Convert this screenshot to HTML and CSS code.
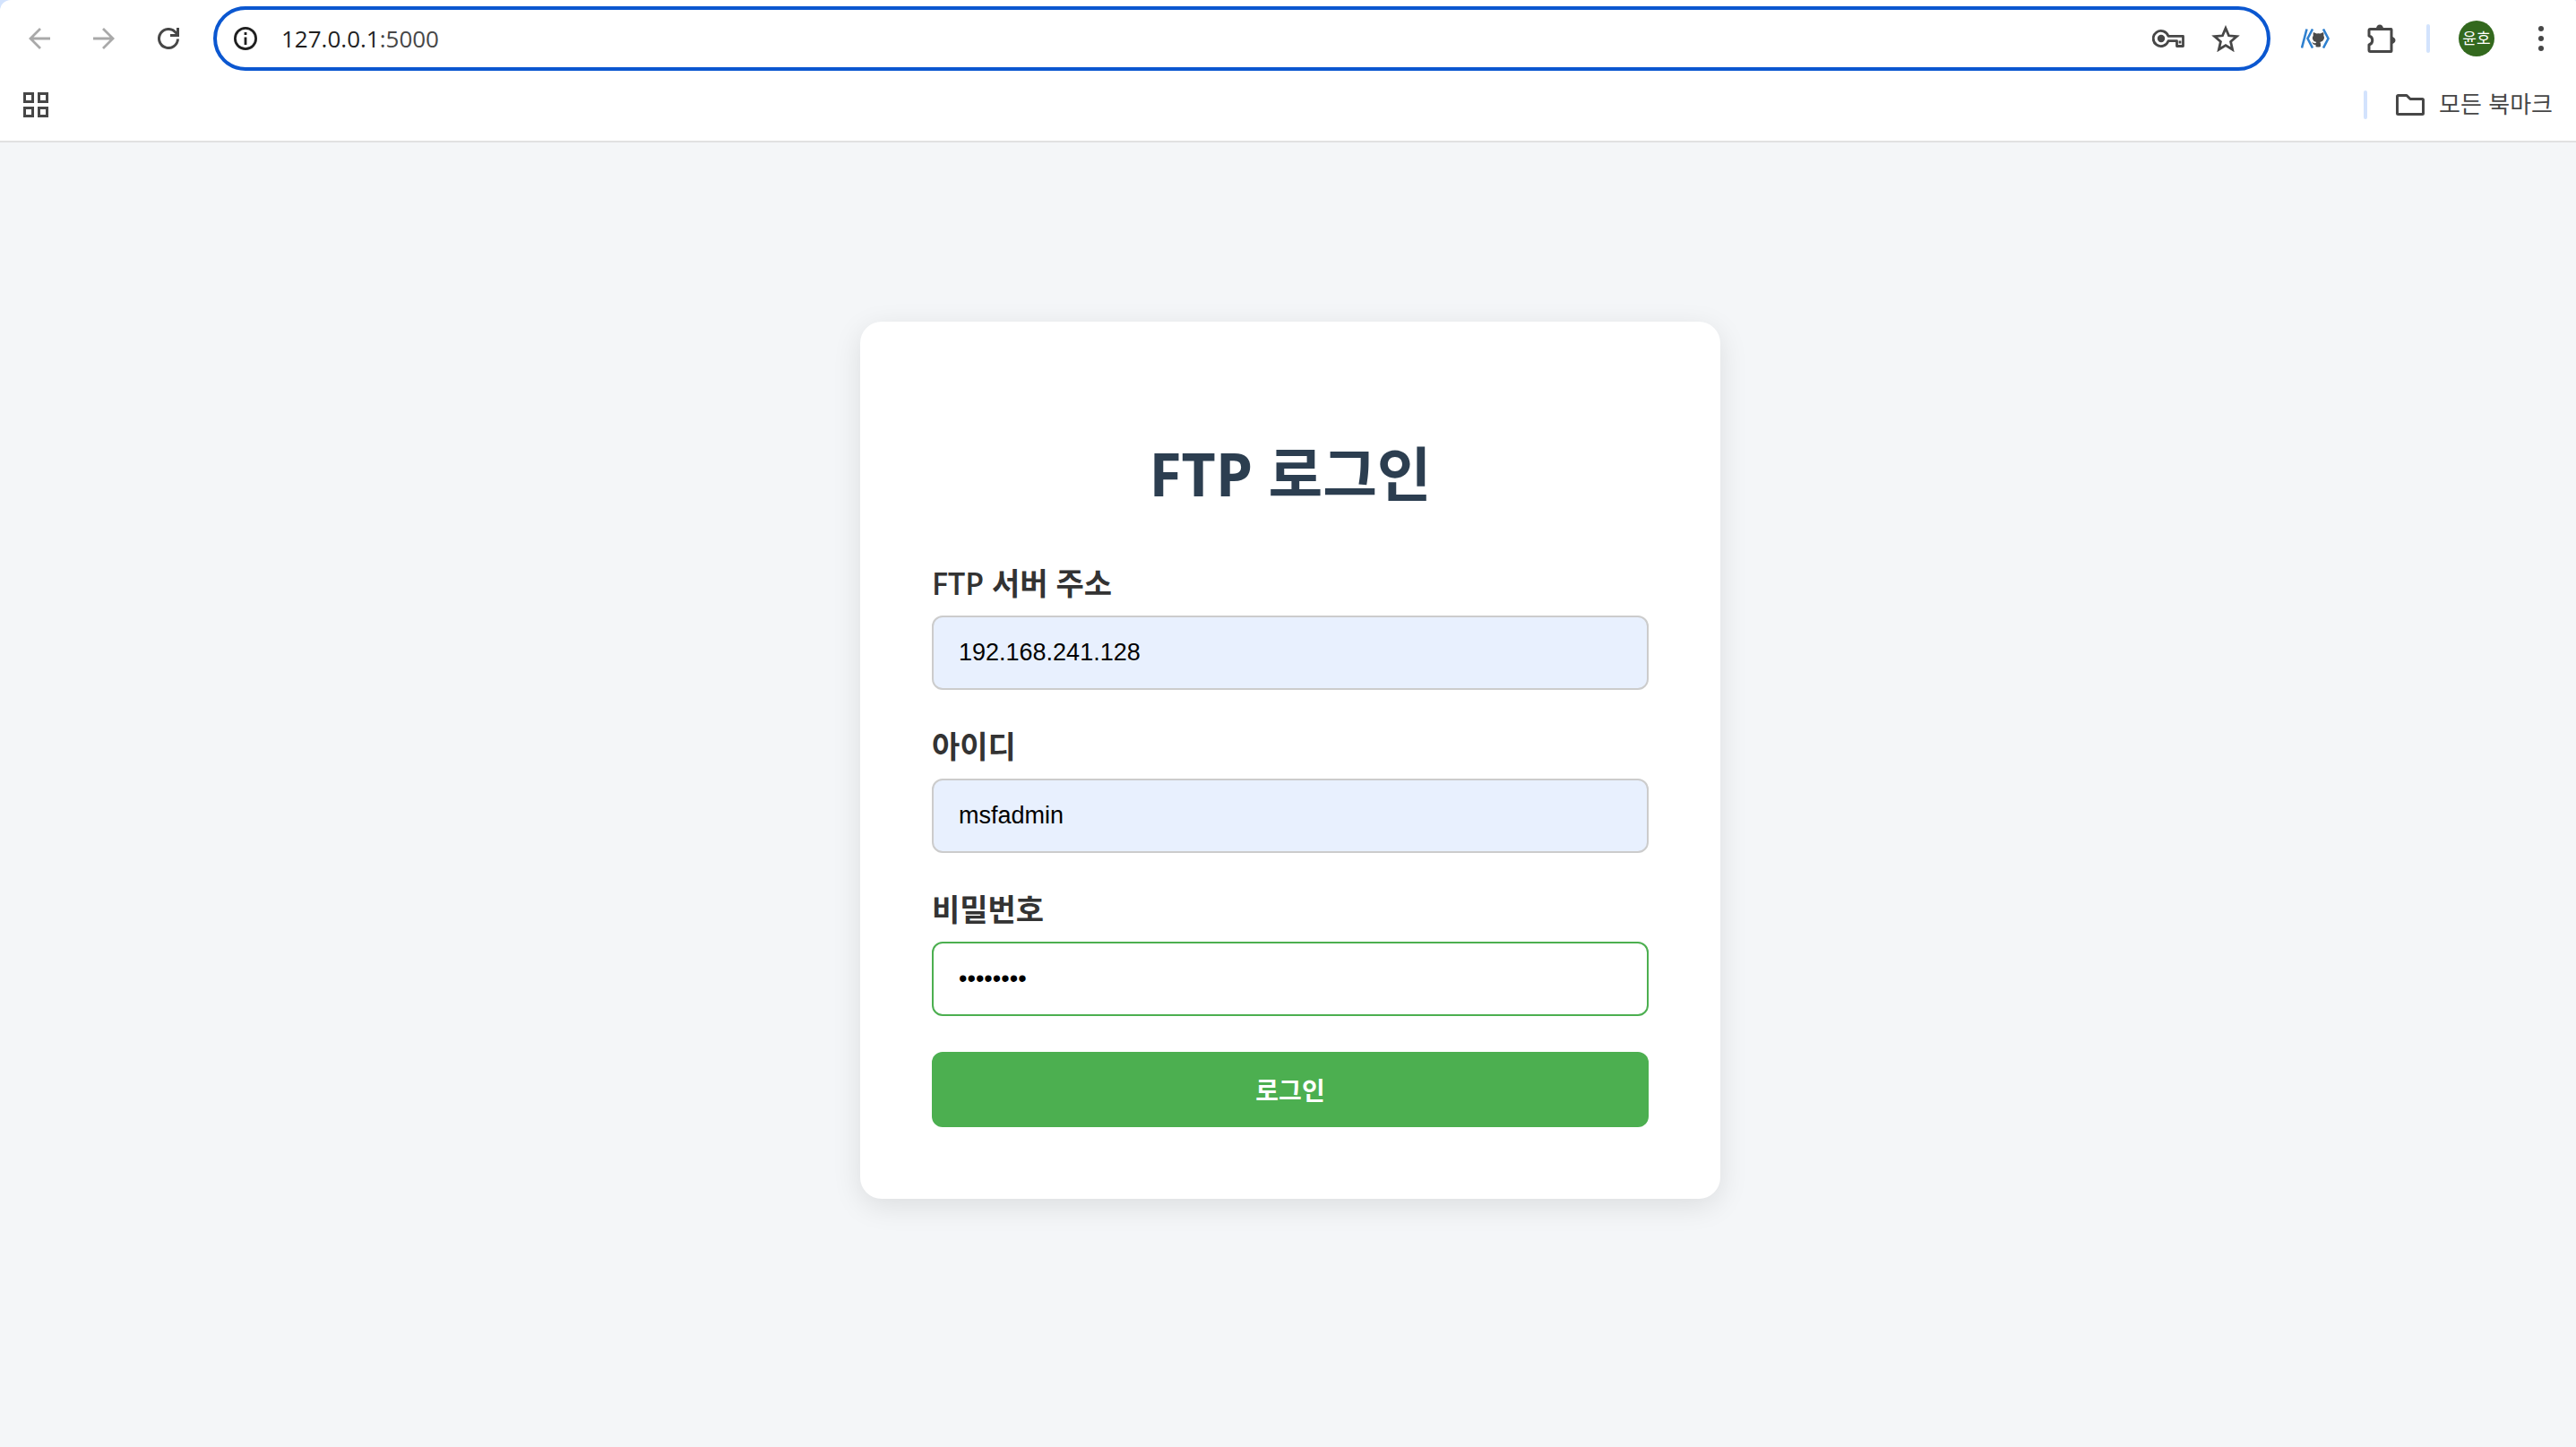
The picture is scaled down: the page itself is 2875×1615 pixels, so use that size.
FILE: index.html
```html
<!DOCTYPE html>
<html lang="ko">
<head>
<meta charset="utf-8">
<meta name="viewport" content="width=device-width, initial-scale=1">
<title>FTP 로그인</title>
<link rel="stylesheet" href="styles.css">
</head>
<body>
<header class="browser">
  <div class="toolbar">
    <nav class="nav-buttons" aria-label="탐색">
      <button class="icon-button disabled" type="button" aria-label="뒤로">
        <svg width="24" height="24" viewBox="0 0 24 24" fill="none" stroke="currentColor" stroke-width="2.8"><path d="M24 12H2.5M13 1L2 12l11 11"/></svg>
      </button>
      <button class="icon-button disabled" type="button" aria-label="앞으로">
        <svg width="24" height="24" viewBox="0 0 24 24" fill="none" stroke="currentColor" stroke-width="2.8"><path d="M0 12h21.500M11 1l11 11-11 11"/></svg>
      </button>
      <button class="icon-button" type="button" aria-label="새로고침">
        <svg width="24" height="24" viewBox="0 0 24 24" fill="none" stroke="currentColor" stroke-width="3"><path d="M22.500 12.500A10.500 10.500 0 1 1 20.200 5.400L22 7.500M22.500 0v8.500H14"/></svg>
      </button>
    </nav>
    <div class="omnibox">
      <button class="icon-button site-info" type="button" aria-label="사이트 정보">
        <svg width="26" height="26" viewBox="0 0 26 26" fill="none" stroke="currentColor" stroke-width="2.800"><circle cx="13" cy="13" r="11.600"/><path d="M13 11.500V20M13 6v3"/></svg>
      </button>
      <div class="url">127.0.0.1<span class="port">:5000</span></div>
      <button class="icon-button" type="button" aria-label="비밀번호 관리">
        <svg width="36" height="22" viewBox="0 0 36 22" fill="none" stroke="currentColor" stroke-width="2.800" stroke-linejoin="round"><circle cx="10" cy="11" r="4.200" fill="currentColor" stroke="none"/><path d="M18 8.400A8.600 8.600 0 1 0 18 13.600h9.500V19.500h7V8.400zM31 13.500v3"/></svg>
      </button>
      <button class="icon-button star" type="button" aria-label="북마크 추가">
        <svg width="32" height="30" viewBox="0 0 32 30" fill="none" stroke="currentColor" stroke-width="2.800"><path d="M16 3.500l3.500 8.300 8.900.8-6.800 5.900 2 8.800-7.600-4.700-7.600 4.700 2-8.800-6.800-5.900 8.900-.8z"/></svg>
      </button>
    </div>
    <button class="icon-button" type="button" aria-label="GitHub 코드 확장 프로그램">
      <svg width="32" height="22" viewBox="0 0 32 22" fill="none"><path d="M6.500 .5L1 21.500M13 .5L7.500 11 13 21.500M25 .5l5.500 10.500L25 21.500" stroke="#2f80cf" stroke-width="2.600"/><path d="M14 4l3.500 1.500q2-.5 4 0L25 4q.8 2 .3 3.500 1.200 2 .2 4.500-1 2.500-4.200 3 .7.800.7 2v3q-3 1-5.500 0v-2q-3 .6-4.300-3.500 2 2.500 4.300 1.500l.8-1q-3.400-.5-4.100-3-.7-2.500.6-4.500Q13.300 5.500 14 4z" fill="#4a4a4a"/></svg>
    </button>
    <button class="icon-button puzzle" type="button" aria-label="확장 프로그램">
      <svg width="32" height="32" viewBox="0 0 32 32"><path d="M10 5a4 4.500 0 0 1 8 0zM27 14a4.500 4 0 0 1 0 8z" fill="currentColor"/><path d="M3.500 5.500h23a.5.500 0 0 1 .5.500v24a.5.500 0 0 1-.5.500h-23a1.500 1.500 0 0 1-1.500-1.500v-6a5.200 5.200 0 0 0 0-10V7a1.500 1.500 0 0 1 1.500-1.500z" fill="none" stroke="currentColor" stroke-width="3" stroke-linejoin="round"/></svg>
    </button>
    <span class="divider"></span>
    <button class="avatar" type="button">윤호</button>
    <button class="icon-button" type="button" aria-label="메뉴">
      <svg width="6" height="28" viewBox="0 0 6 28" fill="currentColor"><circle cx="3" cy="3" r="3"/><circle cx="3" cy="14" r="3"/><circle cx="3" cy="25" r="3"/></svg>
    </button>
  </div>
  <div class="bookmarks">
    <button class="icon-button" type="button" aria-label="앱">
      <svg width="28" height="28" viewBox="0 0 28 28" fill="none" stroke="currentColor" stroke-width="3"><path d="M1.500 1.500h9v9h-9zM17.500 1.500h9v9h-9zM1.500 17.500h9v9h-9zM17.500 17.500h9v9h-9z"/></svg>
    </button>
    <div class="bookmarks-end">
      <span class="divider"></span>
      <button class="all-bookmarks" type="button">
        <svg width="32" height="24" viewBox="0 0 32 24" fill="none" stroke="currentColor" stroke-width="3" stroke-linejoin="round"><path d="M2.500 1.500H12l4 4h13.500a1 1 0 0 1 1 1v15a1 1 0 0 1-1 1h-27a1 1 0 0 1-1-1v-19a1 1 0 0 1 1-1z"/></svg>
        <span class="bookmarks-text">모든 북마크</span>
      </button>
    </div>
  </div>
</header>
<main class="page">
  <form class="card">
    <h1 class="title">FTP 로그인</h1>
    <div class="field">
      <label class="label" for="host">FTP 서버 주소</label>
      <input class="input autofilled" id="host" type="text" value="192.168.241.128">
    </div>
    <div class="field">
      <label class="label" for="user">아이디</label>
      <input class="input autofilled" id="user" type="text" value="msfadmin">
    </div>
    <div class="field">
      <label class="label" for="password">비밀번호</label>
      <input class="input active" id="password" type="password" value="msfadmin">
    </div>
    <button class="submit" type="button">로그인</button>
  </form>
</main>
</body>
</html>
```
FILE: styles.css
```css
* {
  box-sizing: border-box;
}

body {
  margin: 0;
  min-height: 100vh;
  background: #f4f6f8;
  color: #333;
  font-family: "Open Sans", "Noto Sans CJK KR", sans-serif;
}

button {
  border: 0;
  margin: 0;
  padding: 0;
  background: none;
  color: inherit;
  font-family: inherit;
}

svg {
  display: block;
  flex: none;
}

/* Browser chrome */
.browser {
  background: linear-gradient(#d3e3fd, #d3e3fd) top / 100% 12px no-repeat #fff;
  color: #474747;
  border-bottom: 2px solid #e1e1e1;
}

.toolbar {
  display: flex;
  align-items: center;
  height: 86px;
  padding: 0 36px 0 32px;
  background: #fff;
  border-radius: 12px 2px 0 0;
}

.nav-buttons {
  display: flex;
  gap: 48px;
  margin-right: 38px;
}

.icon-button {
  flex: none;
}

.disabled {
  color: #a9a9a9;
}

.omnibox {
  display: flex;
  flex: 1;
  align-items: center;
  height: 72px;
  margin-right: 34px;
  padding: 0 30px 0 19px;
  border: 4px solid #0b57d0;
  border-radius: 36px;
}

.site-info {
  color: #1f1f1f;
}

.url {
  flex: 1;
  margin-left: 27px;
  color: #1f1f1f;
  font-size: 26px;
  line-height: 36px;
}

.port {
  color: #474747;
}

.star {
  margin-left: 30px;
}

.puzzle {
  margin: 0 34px 0 42px;
}

.divider {
  flex: none;
  width: 4px;
  height: 32px;
  border-radius: 2px;
  background: #d3e3fd;
}

.avatar {
  flex: none;
  width: 40px;
  height: 40px;
  margin: 0 49px 0 32px;
  border-radius: 50%;
  background: #33691e;
  color: #fff;
  font-size: 17px;
  line-height: 40px;
}

.bookmarks {
  display: flex;
  align-items: center;
  justify-content: space-between;
  padding: 15px 26px 24px;
}

.bookmarks-end,
.all-bookmarks {
  display: flex;
  align-items: center;
}

.bookmarks-end {
  gap: 32px;
}

.all-bookmarks {
  gap: 16px;
  font-family: "Noto Sans CJK KR", sans-serif;
  font-size: 26px;
  line-height: 28px;
}

.bookmarks-text {
  padding-bottom: 4px;
}

/* Login page */
.page {
  display: flex;
  justify-content: center;
  padding: 200px 0 80px;
}

.card {
  width: 960px;
  max-width: 100%;
  margin-left: 5px;
  padding: 80px;
  border-radius: 24px;
  background: #fff;
  box-shadow: 0 8px 32px rgba(0, 0, 0, 0.1);
}

.title {
  margin: 46px 0 57px;
  color: #2c3e50;
  font-size: 66px;
  font-weight: 700;
  line-height: 86px;
  text-align: center;
}

.field {
  display: flex;
  flex-direction: column;
  gap: 12px;
  margin-bottom: 40px;
}

.label {
  font-size: 34px;
  font-weight: 600;
  line-height: 47px;
}

.input {
  width: 100%;
  height: 83px;
  padding: 0 28px;
  border: 2px solid #ccc;
  border-radius: 12px;
  outline: 0;
  background: #fff;
  color: #000;
  font-family: "Liberation Sans", Arial, sans-serif;
  font-size: 27px;
}

.autofilled {
  background: #e8f0fe;
}

.active {
  border-color: #4caf50;
}

.submit {
  display: block;
  width: 100%;
  height: 84px;
  border-radius: 12px;
  background: #4caf50;
  color: #fff;
  font-size: 28px;
  font-weight: 700;
}
```
